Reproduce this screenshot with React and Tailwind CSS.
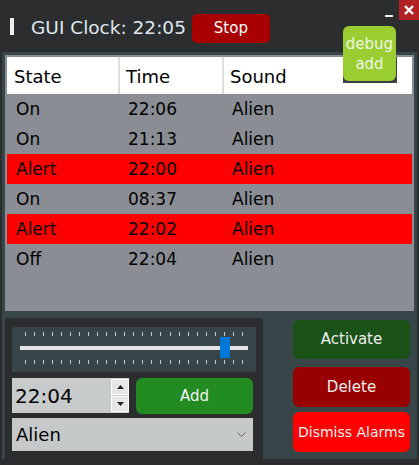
import React from 'react';

// alarm rows shown in the table
const ALARMS = [
  { state: 'On', time: '22:06', sound: 'Alien' },
  { state: 'On', time: '21:13', sound: 'Alien' },
  { state: 'Alert', time: '22:00', sound: 'Alien' },
  { state: 'On', time: '08:37', sound: 'Alien' },
  { state: 'Alert', time: '22:02', sound: 'Alien' },
  { state: 'Off', time: '22:04', sound: 'Alien' },
];

const TICKS = Array.from({ length: 25 }, (_, i) => i);

function Ticks() {
  return (
    <div className="ml-[13px] w-[218px] h-[4px] flex justify-between">
      {TICKS.map((t) => (
        <div key={t} className="w-px h-[4px] bg-[#c8cccd]" />
      ))}
    </div>
  );
}

export default function App() {
  return (
    <div
      className="w-[419px] h-[465px] bg-[#2b2d2f] flex flex-col relative overflow-hidden"
      style={{ fontFamily: '"DejaVu Sans", "Liberation Sans", sans-serif' }}
    >
      {/* title bar */}
      <div className="h-[52px] flex items-start shrink-0">
        <div className="w-[4px] h-[17px] bg-[#eeeeee] ml-[10px] mt-[18px]" />
        <div className="ml-[17px] mt-[16px] text-[18.5px] leading-[24px] text-[#dfe7ef]">GUI Clock: 22:05</div>
        <button className="ml-[6px] mt-[14px] w-[78px] h-[29px] rounded-[5px] bg-[#a80000] text-white text-[15px] leading-[29px] text-center">
          Stop
        </button>
        <div className="ml-auto mt-[15px] w-[8px] h-[2px] bg-[#eeeeee]" />
        <button className="ml-[6px] w-[20px] h-[20px] bg-[#b22222] flex items-center justify-center">
          <svg width="12" height="12" viewBox="0 0 12 12">
            <path d="M2 2 L10 10 M10 2 L2 10" stroke="#ffffff" strokeWidth="2.4" />
          </svg>
        </button>
      </div>

      {/* body */}
      <div className="flex-1 mx-[2px] bg-[#394649] px-[3px] pt-[3px] flex flex-col">
        {/* table */}
        <div className="h-[256px] bg-[#8a8e94] p-[2px]">
          <div className="h-[37px] bg-white flex items-center text-[18px] text-black">
            <div className="w-[113px] h-full pl-[7px] pt-[2px] flex items-center border-r-2 border-[#dddddd]">State</div>
            <div className="w-[104px] h-full pl-[6px] pt-[2px] flex items-center border-r-2 border-[#dddddd]">Time</div>
            <div className="flex-1 pl-[6px] pt-[2px]">Sound</div>
          </div>
          {ALARMS.map((a, i) => (
            <div
              key={i}
              className={`h-[30px] pt-[2px] flex items-center text-[17px] text-black ${a.state === 'Alert' ? 'bg-[#ff0000]' : ''}`}
            >
              <div className="w-[113px] pl-[9px]">{a.state}</div>
              <div className="w-[104px] pl-[8px]">{a.time}</div>
              <div className="flex-1 pl-[8px]">{a.sound}</div>
            </div>
          ))}
        </div>

        {/* controls */}
        <div className="flex mt-[7px]">
          <div className="w-[258px] h-[141px] bg-[#2b2d2f] pl-[7px] pt-[9px]">
            <div className="w-[244px] h-[45px] bg-[#394649] pt-[5px] relative">
              <Ticks />
              <div className="ml-[8px] mt-[10px] w-[228px] h-[4px] bg-[#e4e4e4]" />
              <div className="mt-[10px]">
                <Ticks />
              </div>
              <div className="absolute left-[208px] top-[10px] w-[10px] h-[21px] bg-[#0078d7]" />
            </div>
            <div className="flex mt-[6px] gap-[7px]">
              <div className="w-[117px] h-[35px] bg-[#c8cbcc] flex items-center relative">
                <span className="pl-[3px] text-[20px] text-black">22:04</span>
                <div className="absolute left-[99px] top-[1px] w-[18px] flex flex-col gap-[1px]">
                  <div className="h-[16px] bg-[#e6e6e6] border border-white flex items-center justify-center">
                    <svg width="7" height="4" viewBox="0 0 7 4"><path d="M0 4 L3.5 0 L7 4Z" fill="#222" /></svg>
                  </div>
                  <div className="h-[16px] bg-[#e6e6e6] border border-white flex items-center justify-center">
                    <svg width="7" height="4" viewBox="0 0 7 4"><path d="M0 0 L3.5 4 L7 0Z" fill="#222" /></svg>
                  </div>
                </div>
              </div>
              <button className="w-[117px] h-[36px] rounded-[6px] bg-[#228b22] text-[#f2f2f2] text-[15px]">Add</button>
            </div>
            <div className="mt-[4px] w-[241px] h-[33px] bg-[#c6c9ca] flex items-center justify-between pl-[4px] pr-[7px]">
              <span className="text-[18px] text-black">Alien</span>
              <svg width="9" height="5" viewBox="0 0 9 5"><path d="M0.5 0.5 L4.5 4.5 L8.5 0.5" stroke="#666" fill="none" /></svg>
            </div>
          </div>

          <div className="ml-[30px] flex flex-col pt-[2px]">
            <button className="w-[117px] h-[39px] rounded-[6px] bg-[#1a5218] text-[#f0f0f0] text-[15px]">Activate</button>
            <button className="mt-[8px] w-[117px] h-[40px] rounded-[6px] bg-[#990000] text-[#f0f0f0] text-[15px]">Delete</button>
            <button className="mt-[5px] w-[117px] h-[40px] rounded-[6px] bg-[#ff0000] text-[#f4f4f4] text-[14px]">Dismiss Alarms</button>
          </div>
        </div>
      </div>
      <div className="h-[6px] shrink-0" />

      {/* debug add button floating over the header */}
      <div className="absolute left-[343px] top-[57px] w-[54px] h-[26px] bg-[#3b3f44]" />
      <button className="absolute left-[343px] top-[26px] w-[53px] h-[55px] rounded-[6px] bg-[#9acd32] text-[#eef5e0] text-[15px] leading-[20px]">
        debug
        <br />
        add
      </button>
    </div>
  );
}
